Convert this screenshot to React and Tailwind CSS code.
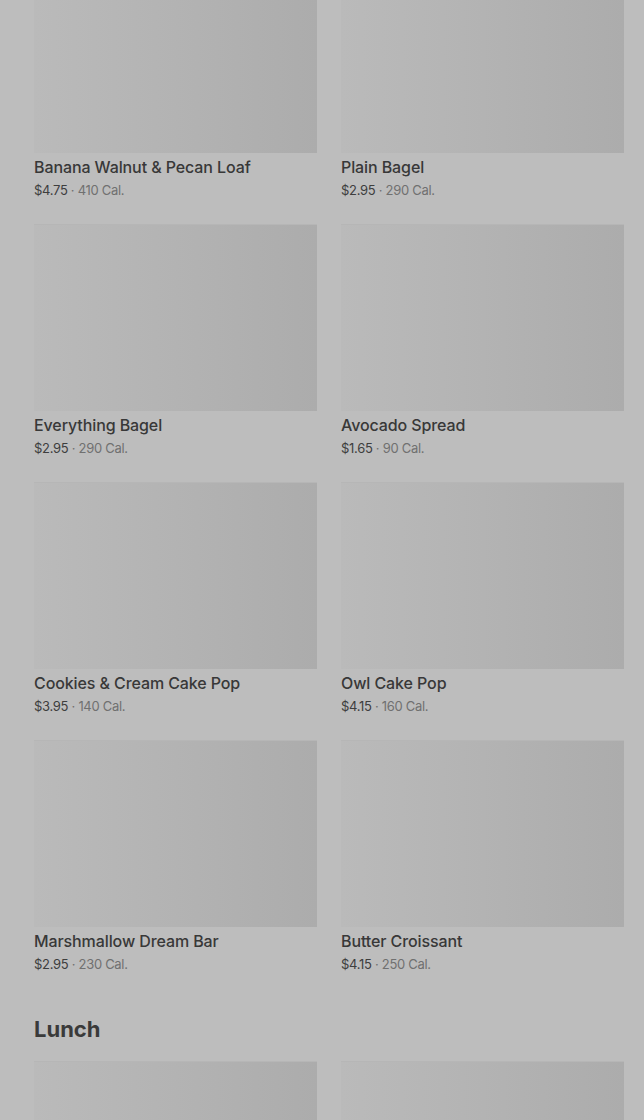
const pastries = [
  { name: 'Banana Walnut & Pecan Loaf', price: '$4.75', cal: '410 Cal.' },
  { name: 'Plain Bagel', price: '$2.95', cal: '290 Cal.' },
  { name: 'Everything Bagel', price: '$2.95', cal: '290 Cal.' },
  { name: 'Avocado Spread', price: '$1.65', cal: '90 Cal.' },
  { name: 'Cookies & Cream Cake Pop', price: '$3.95', cal: '140 Cal.' },
  { name: 'Owl Cake Pop', price: '$4.15', cal: '160 Cal.' },
  { name: 'Marshmallow Dream Bar', price: '$2.95', cal: '230 Cal.' },
  { name: 'Butter Croissant', price: '$4.15', cal: '250 Cal.' },
];

function ItemCard({ item }) {
  return (
    <div>
      <div className="h-[187px] bg-gradient-to-r from-[#bababa] via-[#b3b3b3] to-[#acacac] border-t border-[#b6b6b6]" />
      <p className="mt-[4px] text-[16px] leading-[20px] font-medium tracking-[-0.1px] text-[#383838]">{item.name}</p>
      <p className="mt-[3px] text-[13px] leading-[20px] tracking-[-0.3px] text-[#3e3e3e]">
        {item.price}
        <span className="text-[#707070]"> · {item.cal}</span>
      </p>
    </div>
  );
}

export default function App() {
  return (
    <div className="min-h-[1120px] bg-[#bdbdbd] overflow-hidden pl-[34px] pr-[20px]" style={{ fontFamily: 'Inter, Roboto, sans-serif' }}>
      {/* Bakery items */}
      <div className="grid grid-cols-2 gap-x-[24px] gap-y-[24px] -mt-[34px]">
        {pastries.map((item) => (
          <ItemCard key={item.name} item={item} />
        ))}
      </div>

      {/* Lunch */}
      <h2 className="mt-[39px] mb-[16px] text-[22px] leading-[32px] font-bold text-[#3a3a3a]">Lunch</h2>
      <div className="grid grid-cols-2 gap-x-[24px]">
        <div className="h-[187px] bg-gradient-to-r from-[#bababa] via-[#b3b3b3] to-[#acacac] border-t border-[#b6b6b6]" />
        <div className="h-[187px] bg-gradient-to-r from-[#bababa] via-[#b3b3b3] to-[#acacac] border-t border-[#b6b6b6]" />
      </div>
    </div>
  );
}
